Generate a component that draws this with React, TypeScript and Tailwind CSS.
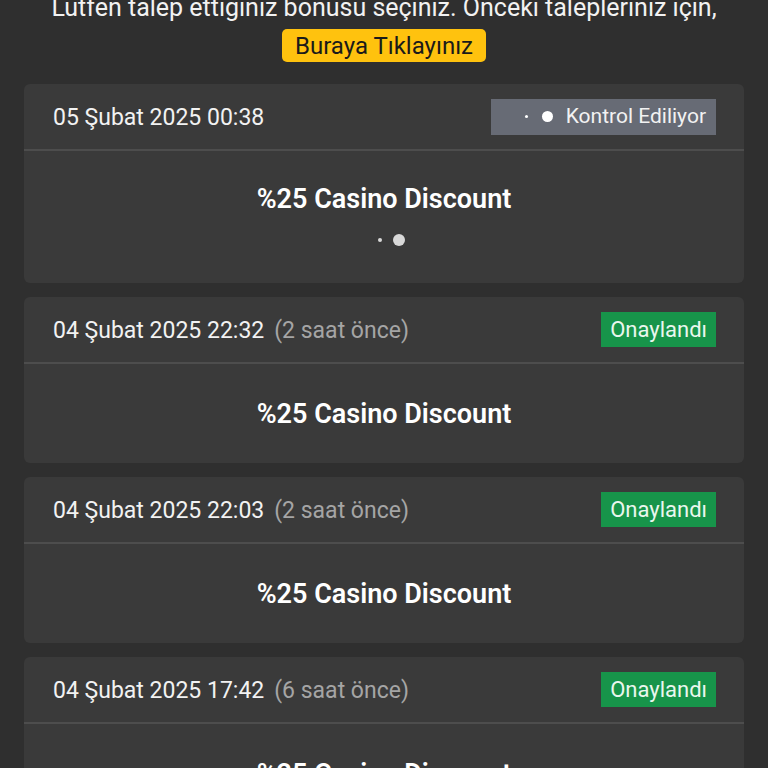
import React from "react";

type Item = { date: string; ago?: string; status: "pending" | "ok" };

const items: Item[] = [
  { date: "05 Şubat 2025 00:38", status: "pending" },
  { date: "04 Şubat 2025 22:32", ago: "(2 saat önce)", status: "ok" },
  { date: "04 Şubat 2025 22:03", ago: "(2 saat önce)", status: "ok" },
  { date: "04 Şubat 2025 17:42", ago: "(6 saat önce)", status: "ok" },
];

function Card({ item }: { item: Item }) {
  return (
    <div className="bg-[#3a3a3a] rounded-[6px] overflow-hidden">
      <div className="h-[67px] flex items-center justify-between pl-[29px] pr-[28px] border-b-2 border-[#4d4d4d]">
        <div className="flex items-center gap-[10px] text-[23px] mt-[3px]">
          <span className="text-[#f2f2f2]">{item.date}</span>
          {item.ago && <span className="text-[#a5a5a5]">{item.ago}</span>}
        </div>
        {item.status === "pending" ? (
          <div className="h-[36px] w-[225px] bg-[#676b75] flex items-center justify-end pr-[10px] gap-[13px] text-[21px] text-[#f2f2f2]">
            <div className="flex items-center gap-[14px]">
              <span className="w-[3px] h-[3px] rounded-full bg-white" />
              <span className="w-[11px] h-[11px] rounded-full bg-white" />
            </div>
            <span>Kontrol Ediliyor</span>
          </div>
        ) : (
          <div className="h-[35px] px-[9px] bg-[#17944a] flex items-center text-[22px] text-[#eaf7ee]">
            Onaylandı
          </div>
        )}
      </div>
      {item.status === "pending" ? (
        <div className="h-[132px] flex flex-col items-center pt-[32px]">
          <div className="text-[27px] font-semibold text-white leading-[32px]">%25 Casino Discount</div>
          <div className="flex items-center gap-[11px] mt-[19px] pl-[14px]">
            <span className="w-[4px] h-[4px] rounded-full bg-[#d8d8d8]" />
            <span className="w-[12px] h-[12px] rounded-full bg-[#d8d8d8]" />
          </div>
        </div>
      ) : (
        <div className="h-[99px] flex items-center justify-center">
          <div className="text-[27px] font-semibold text-white leading-[32px]">%25 Casino Discount</div>
        </div>
      )}
    </div>
  );
}

export default function App() {
  return (
    <div
      className="w-[768px] h-[768px] overflow-hidden bg-[#2f2f2f]"
      style={{ fontFamily: "Roboto, 'Noto Sans', sans-serif" }}
    >
      <div className="mt-[-9px] text-center text-[25px] leading-[34px] text-[#f2f2f2] whitespace-nowrap">
        Lütfen talep ettiğiniz bonusu seçiniz. Önceki talepleriniz için,
      </div>
      <div className="flex justify-center mt-[4px]">
        <div className="h-[33px] w-[204px] justify-center rounded-[5px] bg-[#ffc20e] text-[#1a1a1a] text-[24px] flex items-center">
          Buraya Tıklayınız
        </div>
      </div>
      <div className="px-[24px] mt-[22px] flex flex-col gap-[14px]">
        {items.map((it, i) => (
          <Card key={i} item={it} />
        ))}
      </div>
    </div>
  );
}
